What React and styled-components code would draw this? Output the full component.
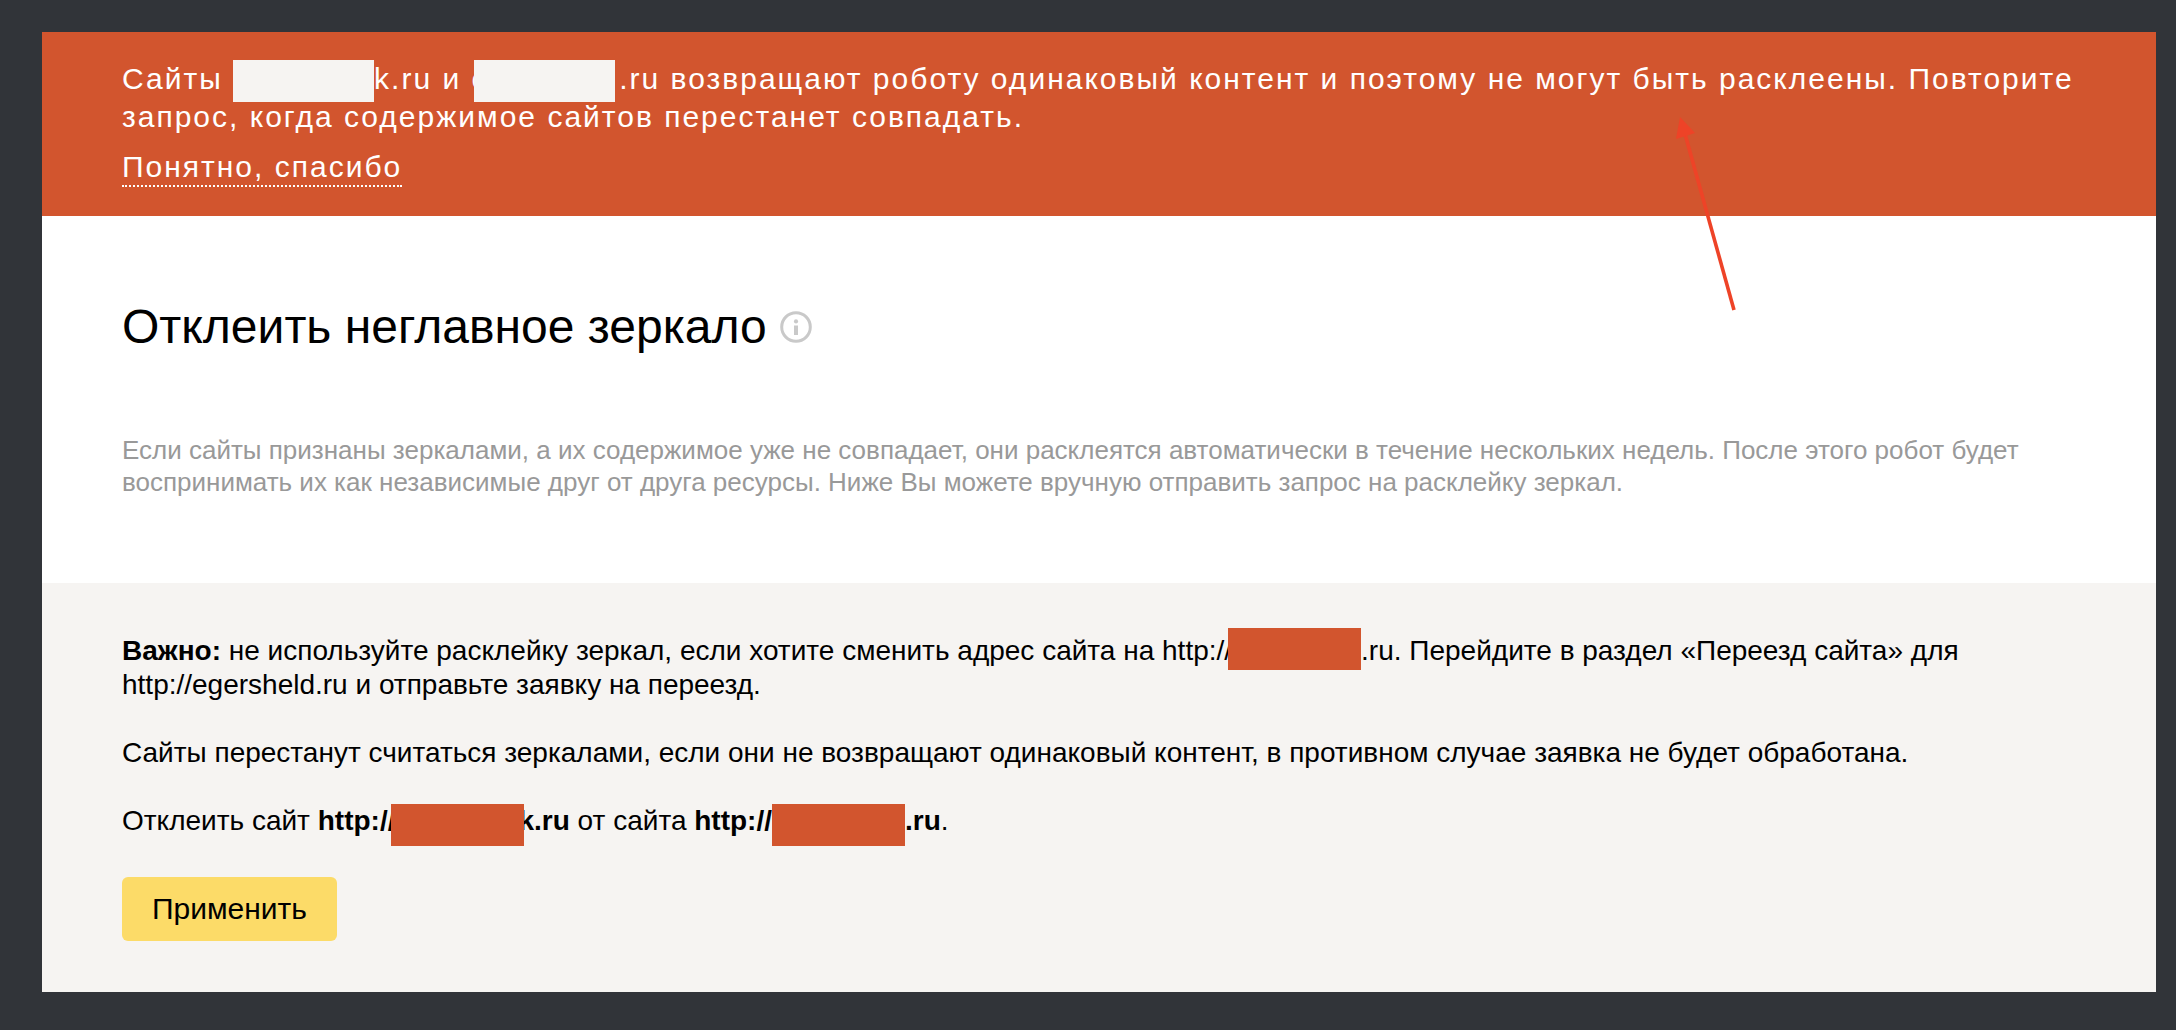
import React from "react";
import styled, { createGlobalStyle } from "styled-components";

const Global = createGlobalStyle`
  html, body { margin: 0; padding: 0; background: #313439; }
  body { font-family: "Liberation Sans", Arial, sans-serif; }
`;

const Page = styled.div`
  width: 2176px;
  height: 1030px;
  box-sizing: border-box;
  padding: 32px 20px 38px 42px;
  overflow: hidden;
`;

const Panel = styled.main`
  position: relative;
  display: flex;
  flex-direction: column;
  height: 960px;
  background: #fff;
`;

const Banner = styled.section`
  height: 184px;
  box-sizing: border-box;
  padding: 28px 80px 0;
  background: #d2552e;
  color: #fff;
  font-size: 30px;
  line-height: 38px;
  letter-spacing: 2px;
`;

const BannerText = styled.p`
  margin: 0;
`;

const DismissLink = styled.a`
  display: inline-block;
  margin-top: 12px;
  line-height: 37px;
  border-bottom: 2px dotted #fff;
`;

const Mask = styled.span`
  position: relative;
  top: ${(p) => p.$top || 0}px;
  display: inline-block;
  width: ${(p) => p.$w}px;
  height: ${(p) => p.$h}px;
  margin: ${(p) => p.$my}px ${(p) => p.$mr || 0}px ${(p) => p.$my}px ${(p) => p.$ml || 0}px;
  vertical-align: middle;
  background: ${(p) => p.$color};
`;

const Intro = styled.section`
  height: 367px;
  box-sizing: border-box;
  padding: 81px 80px 0;
`;

const TitleRow = styled.div`
  display: flex;
  align-items: center;
  gap: 13px;
  height: 60px;
`;

const Title = styled.h1`
  margin: 0;
  font-size: 48px;
  font-weight: 400;
  line-height: 60px;
  color: #000;
`;

const Lead = styled.p`
  margin: 77px 0 0;
  font-size: 26px;
  line-height: 32px;
  color: #999;
`;

const Notice = styled.section`
  flex: 1;
  box-sizing: border-box;
  padding: 52px 80px 0;
  background: #f6f4f2;
  color: #000;
  font-size: 28px;
  line-height: 32px;
`;

const NoticeText = styled.p`
  margin: 0 0 ${(p) => p.$gap}px;
`;

const ApplyButton = styled.button`
  display: block;
  width: 215px;
  height: 64px;
  padding: 0;
  border: 0;
  border-radius: 6px;
  background: #fcdb68;
  color: #000;
  font: 400 30px "Liberation Sans", Arial, sans-serif;
`;

const ArrowMark = styled.svg`
  position: absolute;
  left: 1620px;
  top: 70px;
`;

const InfoIcon = () => (
  <svg width="32" height="32" viewBox="0 0 32 32" fill="none">
    <circle cx="16" cy="16" r="14.3" stroke="#c9c9c9" strokeWidth="3" />
    <circle cx="16" cy="10.4" r="2.1" fill="#c9c9c9" />
    <rect x="14" y="14.5" width="4" height="9.5" fill="#c9c9c9" />
  </svg>
);

export default function App() {
  return (
    <Page>
      <Global />
      <Panel>
        <Banner>
          <BannerText>
            Сайты <Mask $w={141} $h={42} $my={-4} $color="#f6f4f2" />k.ru и е<Mask $w={141} $h={42} $my={-4} $ml={-16} $mr={4} $color="#f6f4f2" />.ru возвращают роботу одинаковый контент и поэтому не могут быть расклеены. Повторите запрос, когда содержимое сайтов перестанет совпадать.
          </BannerText>
          <DismissLink>Понятно, спасибо</DismissLink>
        </Banner>
        <Intro>
          <TitleRow>
            <Title>Отклеить неглавное зеркало</Title>
            <InfoIcon />
          </TitleRow>
          <Lead>
            Если сайты признаны зеркалами, а их содержимое уже не совпадает, они расклеятся автоматически в течение нескольких недель. После этого робот будет воспринимать их как независимые друг от друга ресурсы. Ниже Вы можете вручную отправить запрос на расклейку зеркал.
          </Lead>
        </Intro>
        <Notice>
          <NoticeText $gap={36}>
            <b>Важно:</b> не используйте расклейку зеркал, если хотите сменить адрес сайта на http://<Mask $w={133} $h={42} $my={-5} $ml={-4} $top={-4} $color="#d2552e" />.ru. Перейдите в раздел «Переезд сайта» для http://egersheld.ru и отправьте заявку на переезд.
          </NoticeText>
          <NoticeText $gap={36}>
            Сайты перестанут считаться зеркалами, если они не возвращают одинаковый контент, в противном случае заявка не будет обработана.
          </NoticeText>
          <NoticeText $gap={39}>
            Отклеить сайт <b>http://<Mask $w={133} $h={42} $my={-5} $ml={-4} $mr={-6} $top={3} $color="#d2552e" />k.ru</b> от сайта <b>http://<Mask $w={133} $h={42} $my={-5} $top={3} $color="#d2552e" />.ru</b>.
          </NoticeText>
          <ApplyButton>Применить</ApplyButton>
        </Notice>
        <ArrowMark width="130" height="220" viewBox="0 0 130 220">
          <line x1="72" y1="208" x2="23" y2="32" stroke="#ee4327" strokeWidth="3.6" />
          <polygon points="18,15 14,37 33,31" fill="#ee4327" />
        </ArrowMark>
      </Panel>
    </Page>
  );
}
